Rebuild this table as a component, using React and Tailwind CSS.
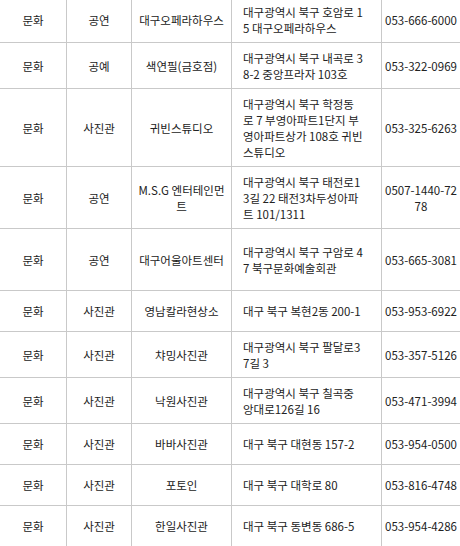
import React from "react";

const rows = [
  { h: "h-[46px]", a: "문화", b: "공연", c: ["대구오페라하우스"], d: ["대구광역시 북구 호암로 1", "5 대구오페라하우스"], e: ["053-666-6000"] },
  { h: "h-[46px]", a: "문화", b: "공예", c: ["색연필(금호점)"], d: ["대구광역시 북구 내곡로 3", "8-2 중앙프라자 103호"], e: ["053-322-0969"] },
  { h: "h-[78px]", a: "문화", b: "사진관", c: ["귀빈스튜디오"], d: ["대구광역시 북구 학정동", "로 7 부영아파트1단지 부", "영아파트상가 108호 귀빈", "스튜디오"], e: ["053-325-6263"] },
  { h: "h-[62px]", a: "문화", b: "공연", c: ["M.S.G 엔터테인먼", "트"], d: ["대구광역시 북구 태전로1", "3길 22 태전3차두성아파", "트 101/1311"], e: ["0507-1440-72", "78"] },
  { h: "h-[62px]", a: "문화", b: "공연", c: ["대구어울아트센터"], d: ["대구광역시 북구 구암로 4", "7 북구문화예술회관"], e: ["053-665-3081"] },
  { h: "h-[41px]", a: "문화", b: "사진관", c: ["영남칼라현상소"], d: ["대구 북구 복현2동 200-1"], e: ["053-953-6922"] },
  { h: "h-[46px]", a: "문화", b: "사진관", c: ["챠밍사진관"], d: ["대구광역시 북구 팔달로3", "7길 3"], e: ["053-357-5126"] },
  { h: "h-[46px]", a: "문화", b: "사진관", c: ["낙원사진관"], d: ["대구광역시 북구 칠곡중", "앙대로126길 16"], e: ["053-471-3994"] },
  { h: "h-[41px]", a: "문화", b: "사진관", c: ["바바사진관"], d: ["대구 북구 대현동 157-2"], e: ["053-954-0500"] },
  { h: "h-[41px]", a: "문화", b: "사진관", c: ["포토인"], d: ["대구 북구 대학로 80"], e: ["053-816-4748"] },
  { h: "h-[41px]", a: "문화", b: "사진관", c: ["한일사진관"], d: ["대구 북구 동변동 686-5"], e: ["053-954-4286"] },
];

function Lines({ lines }) {
  return (
    <div className="flex flex-col">
      {lines.map((l, i) => (
        <span key={i} className="whitespace-nowrap">{l}</span>
      ))}
    </div>
  );
}

export default function App() {
  return (
    <div
      className="w-[460px] h-[546px] overflow-hidden bg-white text-[#222] text-[11.5px] leading-[16px]"
      style={{ fontFamily: '"Noto Sans CJK KR", sans-serif' }}
    >
      <div className="-mt-[3px] flex flex-col">
        {rows.map((r, i) => (
          <div
            key={i}
            className={`grid grid-cols-[67px_65px_100px_150px_78px] border-b border-[#c9c9c9] ${r.h}`}
          >
            <div className="flex items-center justify-center border-r border-[#c9c9c9]">{r.a}</div>
            <div className="flex items-center justify-center border-r border-[#c9c9c9]">{r.b}</div>
            <div className="flex items-center justify-center text-center border-r border-[#c9c9c9]">
              <Lines lines={r.c} />
            </div>
            <div className="flex items-center pl-[11px] border-r border-[#c9c9c9]">
              <Lines lines={r.d} />
            </div>
            <div className="flex items-center justify-center text-center">
              <Lines lines={r.e} />
            </div>
          </div>
        ))}
      </div>
    </div>
  );
}
